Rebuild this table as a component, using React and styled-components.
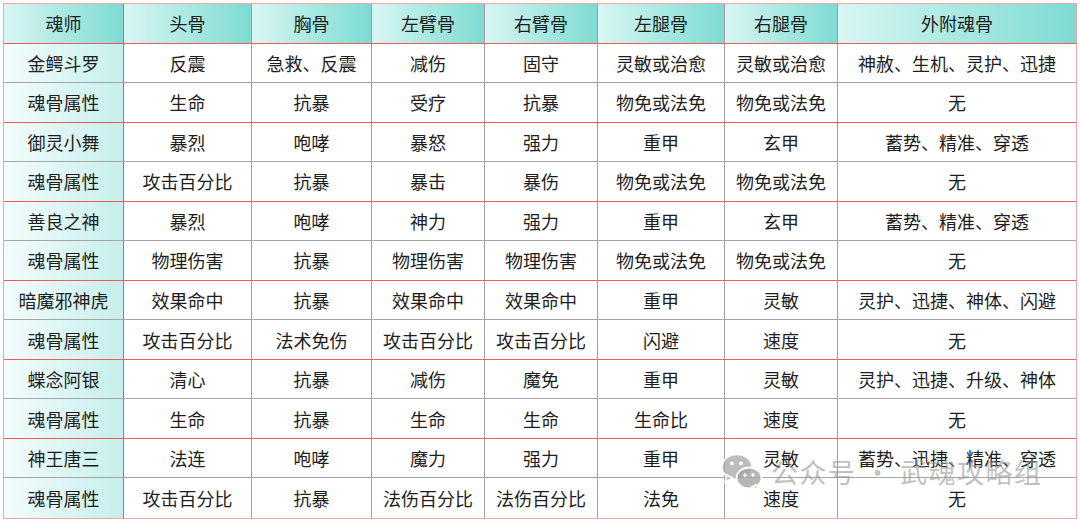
import React from "react";
import styled, { createGlobalStyle } from "styled-components";

const Global = createGlobalStyle`
  html, body { margin: 0; padding: 0; background: #ffffff; }
  body { font-family: "Noto Sans CJK SC", "Noto Sans", sans-serif; }
`;

const Page = styled.div`
  position: relative;
  width: 1080px;
  height: 522px;
  padding: 3px 3px 0 3px;
  box-sizing: border-box;
`;

const Grid = styled.div`
  display: grid;
  grid-template-columns: 120px 128px 120px 113px 113px 127px 113px 1fr;
  grid-template-rows: repeat(13, 1fr);
  width: 1074px;
  height: 516px;
  box-sizing: border-box;
  border: 1px solid #f3a3a3;
`;

const Cell = styled.div`
  display: flex;
  align-items: center;
  justify-content: center;
  font-size: 18px;
  color: #1e1e1e;
  white-space: nowrap;
  box-sizing: border-box;
  border-right: ${(p) => (p.$last ? "none" : `1px solid ${p.$first ? "#7a8a8a" : "#a0a0a0"}`)};
  border-bottom: ${(p) =>
    p.$line === "red" ? "1.5px solid #f25a5a" : p.$line === "gray" ? "1px solid #a6a6a6" : "none"};
  background: ${(p) =>
    p.$head
      ? "linear-gradient(to right, #d9f6f3, #7ddbd2)"
      : p.$first
      ? "linear-gradient(to right, #f3fcfc, #c6efec)"
      : "#ffffff"};
`;

const Watermark = styled.div`
  position: absolute;
  left: 721px;
  top: 452px;
  display: flex;
  align-items: center;
  gap: 8px;
  pointer-events: none;
`;

const MarkText = styled.span`
  font-family: "Noto Sans CJK SC", sans-serif;
  font-size: 27px;
  color: rgba(150, 150, 150, 0.6);
  letter-spacing: 1.5px;
  white-space: nowrap;
`;

const WeChat = () => (
  <svg width="42" height="38" viewBox="0 0 42 38">
    <g fill="rgba(165,165,165,0.75)" stroke="#ffffff" strokeWidth="1.5">
      <ellipse cx="16" cy="14" rx="15" ry="12.5" />
      <path d="M6 22 L4 29 L12 25 Z" />
    </g>
    <g fill="rgba(165,165,165,0.8)" stroke="#ffffff" strokeWidth="1.8">
      <ellipse cx="28" cy="25" rx="12.5" ry="10.5" />
      <path d="M35 32 L38 37 L31 34 Z" />
    </g>
    <g fill="#ffffff">
      <circle cx="11" cy="10.5" r="2" />
      <circle cx="20" cy="10.5" r="2" />
      <circle cx="24" cy="22" r="1.7" />
      <circle cx="32" cy="22" r="1.7" />
    </g>
  </svg>
);

const header = ["魂师", "头骨", "胸骨", "左臂骨", "右臂骨", "左腿骨", "右腿骨", "外附魂骨"];
const rows = [
  ["金鳄斗罗", "反震", "急救、反震", "减伤", "固守", "灵敏或治愈", "灵敏或治愈", "神赦、生机、灵护、迅捷"],
  ["魂骨属性", "生命", "抗暴", "受疗", "抗暴", "物免或法免", "物免或法免", "无"],
  ["御灵小舞", "暴烈", "咆哮", "暴怒", "强力", "重甲", "玄甲", "蓄势、精准、穿透"],
  ["魂骨属性", "攻击百分比", "抗暴", "暴击", "暴伤", "物免或法免", "物免或法免", "无"],
  ["善良之神", "暴烈", "咆哮", "神力", "强力", "重甲", "玄甲", "蓄势、精准、穿透"],
  ["魂骨属性", "物理伤害", "抗暴", "物理伤害", "物理伤害", "物免或法免", "物免或法免", "无"],
  ["暗魔邪神虎", "效果命中", "抗暴", "效果命中", "效果命中", "重甲", "灵敏", "灵护、迅捷、神体、闪避"],
  ["魂骨属性", "攻击百分比", "法术免伤", "攻击百分比", "攻击百分比", "闪避", "速度", "无"],
  ["蝶念阿银", "清心", "抗暴", "减伤", "魔免", "重甲", "灵敏", "灵护、迅捷、升级、神体"],
  ["魂骨属性", "生命", "抗暴", "生命", "生命", "生命比", "速度", "无"],
  ["神王唐三", "法连", "咆哮", "魔力", "强力", "重甲", "灵敏", "蓄势、迅捷、精准、穿透"],
  ["魂骨属性", "攻击百分比", "抗暴", "法伤百分比", "法伤百分比", "法免", "速度", "无"],
];

export default function App() {
  return (
    <>
      <Global />
      <Page>
        <Grid>
          {header.map((h, i) => (
            <Cell key={"h" + i} $head $first={i === 0} $last={i === header.length - 1} $line="red">
              {h}
            </Cell>
          ))}
          {rows.map((r, ri) => {
            const line = ri === rows.length - 1 ? "none" : ri % 2 === 1 ? "red" : "gray";
            return r.map((c, ci) => (
              <Cell key={ri + "-" + ci} $first={ci === 0} $last={ci === r.length - 1} $line={line}>
                {c}
              </Cell>
            ));
          })}
        </Grid>
        <Watermark>
          <WeChat />
          <MarkText>公众号 · 武魂攻略组</MarkText>
        </Watermark>
      </Page>
    </>
  );
}
